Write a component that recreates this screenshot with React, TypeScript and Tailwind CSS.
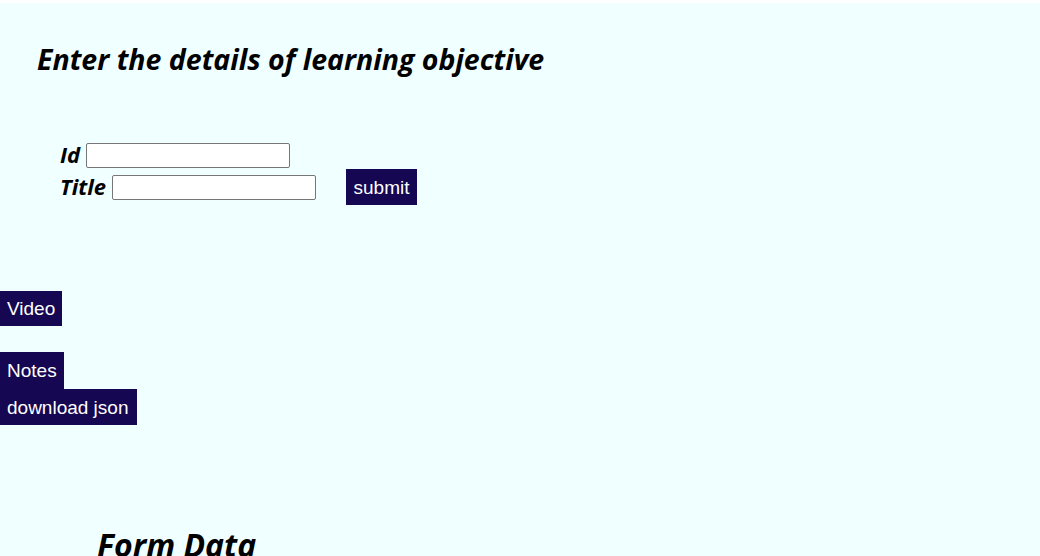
const btn =
  "bg-[#150752] text-white text-[19px] leading-none font-['Liberation_Sans',Arial,sans-serif] px-[7px]";

export default function App() {
  return (
    <div className="h-[556px] w-[1040px] overflow-hidden bg-white pt-[3px]">
      <div className="h-full bg-[#f0ffff]">
        <h1 className="pl-[37px] pt-[38px] font-['Open_Sans',sans-serif] text-[28.5px] font-bold italic leading-[36px] text-black">
          Enter the details of learning objective
        </h1>
        <div className="flex items-end pl-[60px] pt-[66px]">
          <div className="flex flex-col gap-[7px]">
            <div className="flex items-start gap-[6px]">
              <span className="font-['Open_Sans',sans-serif] text-[22px] font-bold italic leading-none">Id</span>
              <input className="h-[25px] w-[204px] rounded-[2px] border border-[#767676] bg-white" />
            </div>
            <div className="flex items-start gap-[6px]">
              <span className="font-['Open_Sans',sans-serif] text-[22px] font-bold italic leading-none">Title</span>
              <input className="h-[25px] w-[204px] rounded-[2px] border border-[#767676] bg-white" />
            </div>
          </div>
          <button className={`${btn} ml-[30px] mb-[-5px] h-[36px] w-[71px]`}>submit</button>
        </div>
        <div className="flex flex-col items-start pt-[91px]">
          <button className={`${btn} h-[35px]`}>Video</button>
          <button className={`${btn} mt-[26px] h-[37px]`}>Notes</button>
          <button className={`${btn} h-[36px] pr-[9px]`}>download json</button>
        </div>
        <h2 className="pl-[97px] pt-[100px] font-['Open_Sans',sans-serif] text-[32px] font-bold italic leading-[40px]">
          Form Data
        </h2>
      </div>
    </div>
  );
}
